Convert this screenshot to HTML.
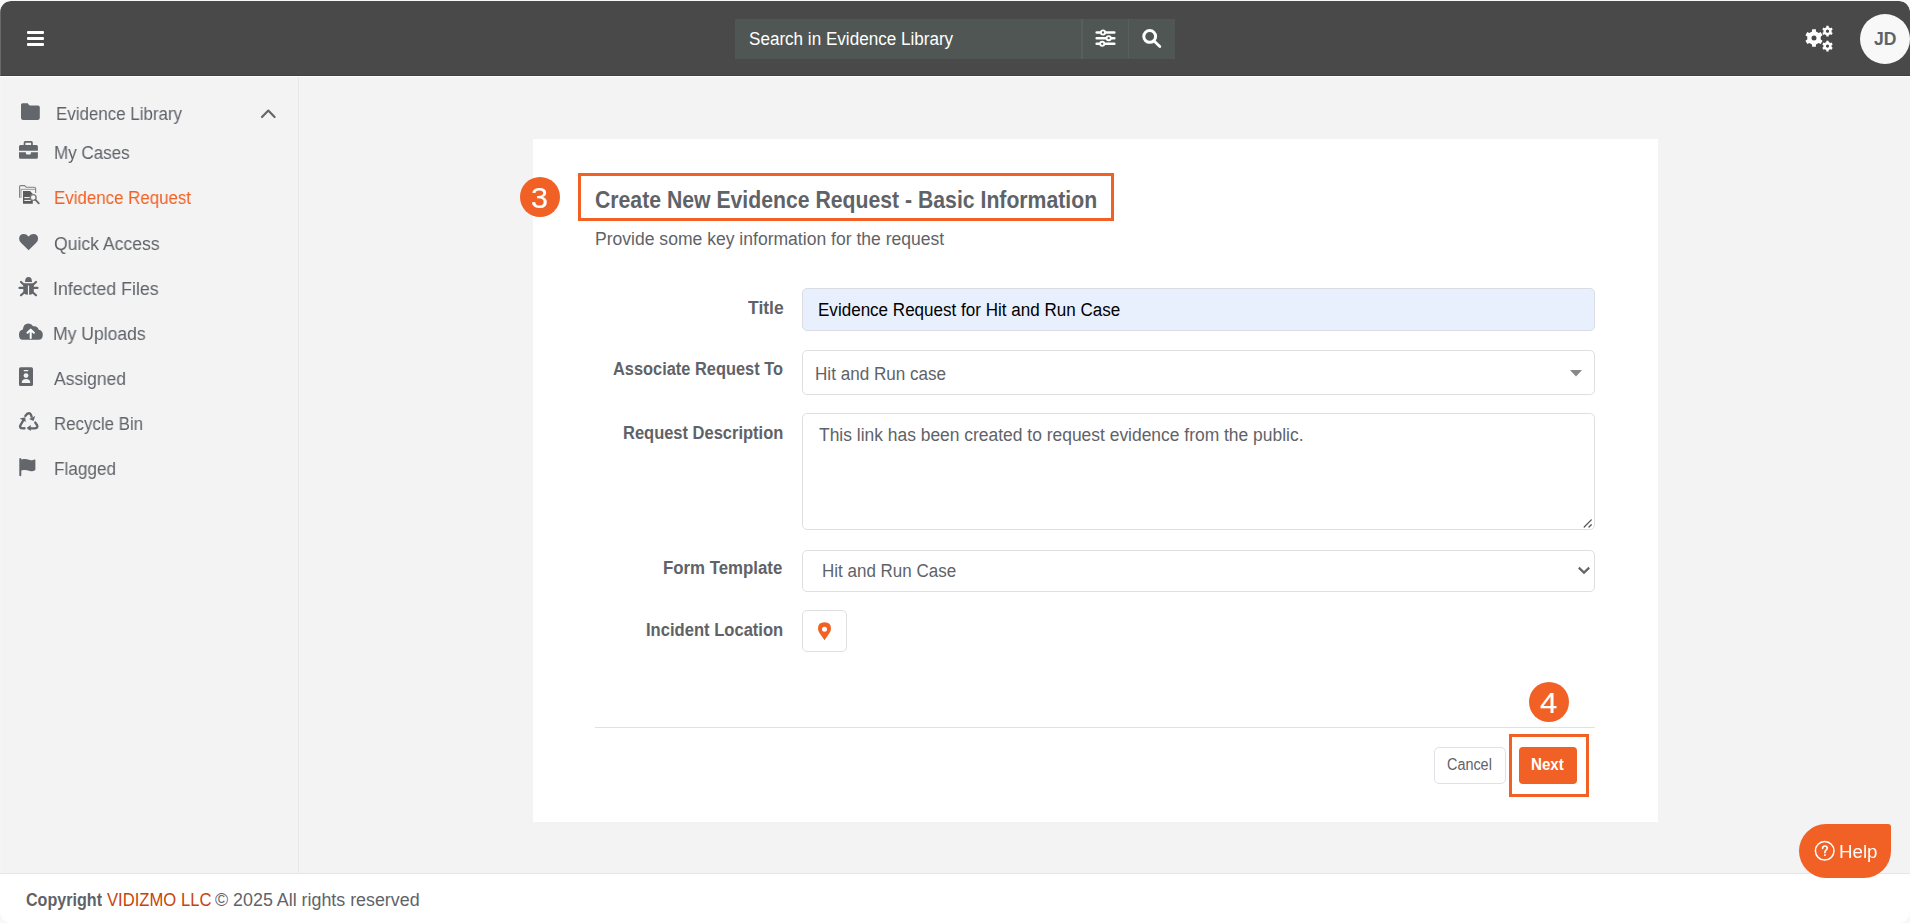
<!DOCTYPE html>
<html><head><meta charset="utf-8">
<style>
html,body{margin:0;padding:0;width:1910px;height:923px;overflow:hidden;background:#ffffff;}
body{position:relative;font-family:"Liberation Sans",sans-serif;}
.t{position:absolute;white-space:nowrap;line-height:1;transform-origin:0 0;}
.gs{will-change:transform;}
.abs{position:absolute;}
#header{position:absolute;left:0;top:1px;width:1910px;height:75px;background:#494949;border-radius:11px 11px 0 0;}
#hdrline{position:absolute;left:0;top:75px;width:1910px;height:1px;background:#3f3f3f;}
#side{position:absolute;left:0;top:77px;width:298px;height:796px;background:#f3f3f3;}
#sideb{position:absolute;left:298px;top:77px;width:1px;height:796px;background:#e5e8ea;}
#main{position:absolute;left:299px;top:77px;width:1611px;height:796px;background:#f3f3f3;}
#footer{position:absolute;left:0;top:873px;width:1910px;height:50px;background:#ffffff;border-top:1px solid #e3e7ea;box-sizing:border-box;border-radius:0 0 12px 12px;}
#search{position:absolute;left:735px;top:19px;width:440px;height:40px;background:#4f5654;}
#card{position:absolute;left:533px;top:139px;width:1125px;height:683px;background:#ffffff;}
.badge{position:absolute;width:40px;height:40px;border-radius:50%;background:#f16024;}
.inp{position:absolute;box-sizing:border-box;border:1px solid #dddfe1;border-radius:5px;background:#fff;}
</style></head><body>
<div id="header"></div>
<div id="hdrline"></div>
<div id="side"></div>
<div id="sideb"></div>
<div id="main"></div>
<div id="footer"></div>
<div id="search"></div>
<div class="abs" style="left:1081px;top:19px;width:2px;height:40px;background:#566060"></div>
<div class="abs" style="left:1128px;top:19px;width:1px;height:40px;background:#566060"></div>
<!-- hamburger -->
<div class="abs" style="left:27px;top:31px;width:17px;height:3px;background:#fff;border-radius:1px"></div>
<div class="abs" style="left:27px;top:37px;width:17px;height:3px;background:#fff;border-radius:1px"></div>
<div class="abs" style="left:27px;top:42.5px;width:17px;height:3px;background:#fff;border-radius:1px"></div>
<!-- avatar -->
<div class="abs" style="left:1860px;top:14px;width:50px;height:50px;border-radius:50%;background:#f8f8f8"></div>
<div id="card"></div>
<div class="badge" style="left:520px;top:177px"></div>
<div class="abs" style="left:578px;top:173px;width:536px;height:48px;box-sizing:border-box;border:3px solid #f16024"></div>
<div class="inp" style="left:802px;top:288px;width:793px;height:42.5px;background:#e8f0fe;border-color:#d9dde3"></div>
<div class="inp" style="left:802px;top:350px;width:793px;height:44.5px"></div>
<div class="inp" style="left:802px;top:413px;width:793px;height:116.5px"></div>
<div class="inp" style="left:802px;top:549.5px;width:793px;height:42px"></div>
<div class="inp" style="left:802px;top:610px;width:45px;height:41.5px"></div>
<div class="abs" style="left:595px;top:727px;width:1000px;height:1px;background:#dee2e6"></div>
<div class="badge" style="left:1529px;top:682px"></div>
<div class="inp" style="left:1434px;top:747px;width:72px;height:37px;border-color:#dee2e6"></div>
<div class="abs" style="left:1519px;top:747px;width:58px;height:37px;border-radius:4px;background:#f16024"></div>
<div class="abs" style="left:1509px;top:734px;width:80px;height:63px;box-sizing:border-box;border:3px solid #f16024"></div>
<!-- help -->
<div class="abs" style="left:1799px;top:824px;width:92px;height:54px;background:#f16024;border-radius:27px 3px 27px 27px"></div>
<svg class="abs" style="left:16px;top:98px" width="28" height="28" viewBox="0 0 28 28"><path fill="#63676b" d="M6.5,5.3 H11.6 L13.6,7.5 H22 Q23.8,7.5 23.8,9.3 V20.1 Q23.8,21.9 22,21.9 H6.8 Q5,21.9 5,20.1 V6.8 Q5,5.3 6.5,5.3Z"/></svg>
<svg class="abs" style="left:16px;top:136px" width="28" height="28" viewBox="0 0 28 28"><path fill="#63676b" fill-rule="evenodd" d="M7.7,9.1 V6.6 Q7.7,5.1 9.2,5.1 H15.3 Q16.8,5.1 16.8,6.6 V9.1 H20.4 Q21.9,9.1 21.9,10.6 V14.8 H3 V10.6 Q3,9.1 4.5,9.1Z M9.4,6.8 V9.1 H15.1 V6.8Z M3,16.3 H9.9 V17.6 Q9.9,18.6 10.9,18.6 H13.9 Q14.9,18.6 14.9,17.6 V16.3 H21.9 V21.2 Q21.9,22.7 20.4,22.7 H4.5 Q3,22.7 3,21.2Z"/></svg>
<svg class="abs" style="left:16px;top:182px" width="28" height="28" viewBox="0 0 28 28"><path fill="none" stroke="#808080" stroke-width="1.1" d="M3.6,15.8 V4.6 Q3.6,3.6 4.6,3.6 H8.6 L10.2,5.2 H18.2 Q19.6,5.2 19.6,6.6 V11"/><path fill="none" stroke="#9a9a9a" stroke-width="1" d="M5,16 V7.3 H19.2"/><path fill="#5b5b5b" d="M7,9 H14 L16.8,12 V21.8 H7Z"/><rect x="8.3" y="15.1" width="5.5" height="1" fill="#fff"/><rect x="8.3" y="17.9" width="6.5" height="1" fill="#fff"/><circle cx="17.2" cy="15.5" r="2.9" fill="#f3f3f3" stroke="#7a7a7a" stroke-width="1.4"/><path d="M19.3,17.6 L22.8,21.3" stroke="#6a6a6a" stroke-width="1.8" stroke-linecap="round"/></svg>
<svg class="abs" style="left:18.6px;top:233.8px" width="20" height="17" viewBox="0 0 20 17"><path fill="#63676b" d="M9.6,16.3 L2.2,9.1 Q0,6.9 0.1,4.2 Q0.4,0.3 4.6,0.1 Q7.2,0 9.6,2.4 Q12,0 14.6,0.1 Q18.8,0.3 19.1,4.2 Q19.2,6.9 17,9.1Z"/></svg>
<svg class="abs" style="left:16px;top:272px" width="28" height="28" viewBox="0 0 28 28"><path fill="#63676b" d="M9,10 Q9,5 12.5,5 Q16,5 16,10Z"/><path fill="#63676b" d="M7.3,11.3 H17.8 V19 Q17.8,22.7 13.1,22.8 V13.6 H11.9 V22.8 Q7.3,22.7 7.3,19Z"/><path stroke="#63676b" stroke-width="2.2" stroke-linecap="round" fill="none" d="M5,10 L8.2,13 M20,10 L16.8,13 M3.5,15.9 H7.5 M21.5,15.9 H17.5 M5,23.3 L8.4,20.2 M20,23.3 L16.6,20.2"/></svg>
<svg class="abs" style="left:16px;top:318px" width="30" height="28" viewBox="0 0 30 28"><path fill="#63676b" d="M6.5,21.8 Q3,21.8 3,16.8 Q3,12.5 6.8,11.6 Q7.5,5.5 12.3,5.5 Q15.5,5.5 17.2,8.3 Q21.5,7.5 22.7,11.8 Q26.8,12.6 26.8,16.8 Q26.8,21.8 22.5,21.8Z"/><path fill="none" stroke="#fff" stroke-width="2" stroke-linecap="round" stroke-linejoin="round" d="M14.7,20 V12 M11.5,14.8 L14.7,11.6 L17.9,14.8"/></svg>
<svg class="abs" style="left:14px;top:362px" width="28" height="28" viewBox="0 0 28 28"><path fill="#63676b" d="M6.6,5.2 H17.4 Q19,5.2 19,6.8 V22.4 Q19,24 17.4,24 H6.6 Q5,24 5,22.4 V6.8 Q5,5.2 6.6,5.2Z"/><rect x="9.6" y="8" width="4.8" height="1.2" rx="0.6" fill="#f3f3f3"/><circle cx="12" cy="13.6" r="2.4" fill="#f3f3f3"/><path fill="#f3f3f3" d="M7.7,21 Q7.7,17 12,17 Q16.3,17 16.3,21Z"/></svg>
<svg class="abs" style="left:14px;top:408px" width="28" height="28" viewBox="0 0 28 28"><g fill="none" stroke="#63676b" stroke-width="2.4" stroke-linecap="round" stroke-linejoin="round"><path d="M11.4,7.9 Q13.5,4.5 15.8,5.4 Q16.9,6 17.6,8.6"/><path d="M9.8,11.5 L6.3,17.5 Q5.3,20.3 8.9,20.4 L10.4,20.3"/><path d="M21.3,14.6 L23.2,17.4 Q24,20.3 20.3,20.4 L15.3,20.4"/></g><path fill="#63676b" d="M15.1,10.9 L21.1,7.9 L19.6,12.9Z M5.7,10.5 L11.2,9.3 L11.8,13.9Z M16.8,16.9 L16.8,22.9 L12.6,20Z"/></svg>
<svg class="abs" style="left:19px;top:457.5px" width="17" height="19" viewBox="0 0 17 19"><path fill="#63676b" d="M1.3,0 Q2.3,0 2.3,1 V1.6 L4.5,1.1 Q7,0.6 9.2,1.6 Q11.6,2.6 14,1.9 L15.4,1.5 Q16.4,1.2 16.4,2.2 V11.4 Q16.4,12.1 15.6,12.4 L14.1,12.9 Q11.6,13.6 9.2,12.6 Q7,11.6 4.5,12.1 L2.3,12.6 V17.3 Q2.3,18.3 1.3,18.3 Q0.3,18.3 0.3,17.3 V1 Q0.3,0 1.3,0Z"/></svg>
<svg class="abs" style="left:258px;top:105px" width="20" height="16" viewBox="0 0 20 16"><path fill="none" stroke="#63676b" stroke-width="2.2" stroke-linecap="round" stroke-linejoin="round" d="M4,12 L10.3,5.6 L16.6,12"/></svg>
<svg class="abs" style="left:1091px;top:24px" width="28" height="28" viewBox="0 0 28 28"><g stroke="#fff" stroke-width="2.6" stroke-linecap="round"><path d="M5.7,8.5 H23.3 M5.7,14.2 H23.3 M5.7,19.8 H23.3"/></g><g fill="#4f5654" stroke="#fff" stroke-width="1.9"><circle cx="12" cy="8.5" r="2.1"/><circle cx="17.7" cy="14.2" r="2.1"/><circle cx="11.2" cy="19.8" r="2.1"/></g></svg>
<svg class="abs" style="left:1137px;top:24px" width="28" height="28" viewBox="0 0 28 28"><circle cx="12.7" cy="12.4" r="5.9" fill="none" stroke="#fff" stroke-width="3"/><path d="M17.6,17.6 L22.8,22.6" stroke="#fff" stroke-width="2.8" stroke-linecap="round"/></svg>
<svg class="abs" style="left:1800px;top:22px" width="38" height="34" viewBox="0 0 38 34"><path fill="#fff" fill-rule="evenodd" d="M12.01,9.39 L12.11,7.20 L15.89,7.20 L15.99,9.39 L18.72,10.97 L20.68,9.97 L22.56,13.23 L20.72,14.42 L20.72,17.58 L22.56,18.77 L20.68,22.03 L18.72,21.03 L15.99,22.61 L15.89,24.80 L12.11,24.80 L12.01,22.61 L9.28,21.03 L7.32,22.03 L5.44,18.77 L7.28,17.58 L7.28,14.42 L5.44,13.23 L7.32,9.97 L9.28,10.97Z M14,13.5 A2.5,2.5 0 1 0 14,18.5 A2.5,2.5 0 1 0 14,13.5Z"/><path fill="#fff" fill-rule="evenodd" d="M26.29,5.18 L26.35,3.82 L28.65,3.82 L28.71,5.18 L30.38,6.14 L31.58,5.51 L32.73,7.51 L31.59,8.24 L31.59,10.16 L32.73,10.89 L31.58,12.89 L30.38,12.26 L28.71,13.22 L28.65,14.58 L26.35,14.58 L26.29,13.22 L24.62,12.26 L23.42,12.89 L22.27,10.89 L23.41,10.16 L23.41,8.24 L22.27,7.51 L23.42,5.51 L24.62,6.14Z M27.5,7.6 A1.6,1.6 0 1 0 27.5,10.8 A1.6,1.6 0 1 0 27.5,7.6Z"/><path fill="#fff" fill-rule="evenodd" d="M26.29,20.08 L26.35,18.72 L28.65,18.72 L28.71,20.08 L30.38,21.04 L31.58,20.41 L32.73,22.41 L31.59,23.14 L31.59,25.06 L32.73,25.79 L31.58,27.79 L30.38,27.16 L28.71,28.12 L28.65,29.48 L26.35,29.48 L26.29,28.12 L24.62,27.16 L23.42,27.79 L22.27,25.79 L23.41,25.06 L23.41,23.14 L22.27,22.41 L23.42,20.41 L24.62,21.04Z M27.5,22.5 A1.6,1.6 0 1 0 27.5,25.7 A1.6,1.6 0 1 0 27.5,22.5Z"/></svg>
<svg class="abs" style="left:1570px;top:369.5px" width="12" height="7" viewBox="0 0 12 7"><path fill="#888" d="M0,0 H12 L6,6.5Z"/></svg>
<svg class="abs" style="left:1576px;top:564px" width="16" height="12" viewBox="0 0 16 12"><path fill="none" stroke="#63676b" stroke-width="2.2" stroke-linejoin="miter" d="M2.8,3.6 L8,8.6 L13.2,3.6"/></svg>
<svg class="abs" style="left:1580px;top:515px" width="16" height="16" viewBox="0 0 16 16"><path stroke="#555" stroke-width="1.3" stroke-linecap="round" d="M4.2,12 L11.3,4.9 M9,12 L11.3,9.7"/></svg>
<svg class="abs" style="left:810px;top:617px" width="28" height="28" viewBox="0 0 28 28"><path fill="#f16024" fill-rule="evenodd" d="M14.5,23.2 L9.5,16 Q8,13.8 8,11.6 Q8,5.2 14.5,5.2 Q21,5.2 21,11.6 Q21,13.8 19.5,16Z M14.5,9.7 A2.5,2.5 0 1 0 14.5,14.7 A2.5,2.5 0 1 0 14.5,9.7Z"/></svg>
<svg class="abs" style="left:1808px;top:836px" width="32" height="30" viewBox="0 0 32 30"><circle cx="16.7" cy="14.8" r="9.3" fill="none" stroke="#fff" stroke-width="1.5"/><path d="M14.6,12.4 Q14.6,10 16.9,10 Q19.2,10 19.2,12.2 Q19.2,13.5 17.6,14.6 Q16.9,15.2 16.9,16.7" fill="none" stroke="#fff" stroke-width="1.6" stroke-linecap="round"/><rect x="16" y="18.3" width="1.8" height="1.6" fill="#fff"/></svg>
<div class="t gs" style="left:56.00px;top:105px;font-size:18px;font-weight:400;color:#5f6368;transform:scaleX(0.9404)">Evidence Library</div>
<div class="t gs" style="left:54.00px;top:144px;font-size:18px;font-weight:400;color:#5f6368;transform:scaleX(0.9453)">My Cases</div>
<div class="t gs" style="left:54.00px;top:189px;font-size:18px;font-weight:400;color:#f16024;transform:scaleX(0.9384)">Evidence Request</div>
<div class="t gs" style="left:54.00px;top:235px;font-size:18px;font-weight:400;color:#5f6368;transform:scaleX(0.9779)">Quick Access</div>
<div class="t gs" style="left:53.00px;top:280px;font-size:18px;font-weight:400;color:#5f6368;transform:scaleX(0.9871)">Infected Files</div>
<div class="t gs" style="left:53.00px;top:325px;font-size:18px;font-weight:400;color:#5f6368;transform:scaleX(0.9749)">My Uploads</div>
<div class="t gs" style="left:54.00px;top:370px;font-size:18px;font-weight:400;color:#5f6368;transform:scaleX(0.9732)">Assigned</div>
<div class="t gs" style="left:54.00px;top:415px;font-size:18px;font-weight:400;color:#5f6368;transform:scaleX(0.9373)">Recycle Bin</div>
<div class="t gs" style="left:54.00px;top:460px;font-size:18px;font-weight:400;color:#5f6368;transform:scaleX(0.9544)">Flagged</div>
<div class="t" style="left:749.00px;top:30px;font-size:18px;font-weight:400;color:#ffffff;transform:scaleX(0.9489)">Search in Evidence Library</div>
<div class="t" style="left:595.00px;top:188px;font-size:24px;font-weight:700;color:#5f6368;transform:scaleX(0.8838)">Create New Evidence Request - Basic Information</div>
<div class="t" style="left:595.00px;top:230px;font-size:18px;font-weight:400;color:#5f6368;transform:scaleX(0.9749)">Provide some key information for the request</div>
<div class="t" style="left:748.00px;top:299px;font-size:18px;font-weight:700;color:#5f6368;transform:scaleX(0.9738)">Title</div>
<div class="t" style="left:613.00px;top:360px;font-size:18px;font-weight:700;color:#5f6368;transform:scaleX(0.9102)">Associate Request To</div>
<div class="t" style="left:623.00px;top:424px;font-size:18px;font-weight:700;color:#5f6368;transform:scaleX(0.9156)">Request Description</div>
<div class="t" style="left:663.00px;top:559px;font-size:18px;font-weight:700;color:#5f6368;transform:scaleX(0.9345)">Form Template</div>
<div class="t" style="left:646.40px;top:621px;font-size:18px;font-weight:700;color:#5f6368;transform:scaleX(0.9210)">Incident Location</div>
<div class="t" style="left:818.00px;top:301px;font-size:18px;font-weight:400;color:#000000;transform:scaleX(0.9467)">Evidence Request for Hit and Run Case</div>
<div class="t" style="left:815.00px;top:365px;font-size:18px;font-weight:400;color:#5f6368;transform:scaleX(0.9493)">Hit and Run case</div>
<div class="t" style="left:818.80px;top:426px;font-size:18px;font-weight:400;color:#5f6368;transform:scaleX(0.9684)">This link has been created to request evidence from the public.</div>
<div class="t" style="left:822.40px;top:562px;font-size:18px;font-weight:400;color:#5f6368;transform:scaleX(0.9438)">Hit and Run Case</div>
<div class="t" style="left:1447.40px;top:757px;font-size:16px;font-weight:400;color:#5f6368;transform:scaleX(0.9001)">Cancel</div>
<div class="t" style="left:1531.20px;top:757px;font-size:16px;font-weight:700;color:#ffffff;transform:scaleX(0.9430)">Next</div>
<div class="t gs" style="left:1839.00px;top:843px;font-size:18px;font-weight:400;color:#ffffff;transform:scaleX(1.0405)">Help</div>
<div class="t" style="left:1874.00px;top:30px;font-size:18px;font-weight:700;color:#5f6368;transform:scaleX(0.9749)">JD</div>
<div class="t gs" style="left:531.20px;top:183px;font-size:30px;font-weight:400;color:#ffffff;transform:scaleX(1.0165);-webkit-text-stroke:0.2px #fff">3</div>
<div class="t gs" style="left:1539.80px;top:688px;font-size:30px;font-weight:400;color:#ffffff;transform:scaleX(1.0317);-webkit-text-stroke:0.2px #fff">4</div>
<div class="t" style="left:26.00px;top:891px;font-size:18px;font-weight:700;color:#5f6368;transform:scaleX(0.8941)">Copyright</div>
<div class="t" style="left:107.00px;top:891px;font-size:18px;font-weight:400;color:#c8430c;transform:scaleX(0.9240)">VIDIZMO LLC</div>
<div class="t" style="left:215.40px;top:891px;font-size:18px;font-weight:400;color:#5f6368;transform:scaleX(0.9913)">© 2025 All rights reserved</div>
<div style="position:absolute;left:0;top:1px;width:1910px;height:922px;border-radius:11px 11px 12px 12px;box-shadow:0 0 0 40px #f8f8f8;pointer-events:none;z-index:10"></div>
<div style="position:absolute;left:0;top:10px;width:1px;height:900px;background:rgba(255,255,255,0.18);z-index:11"></div>
</body></html>
